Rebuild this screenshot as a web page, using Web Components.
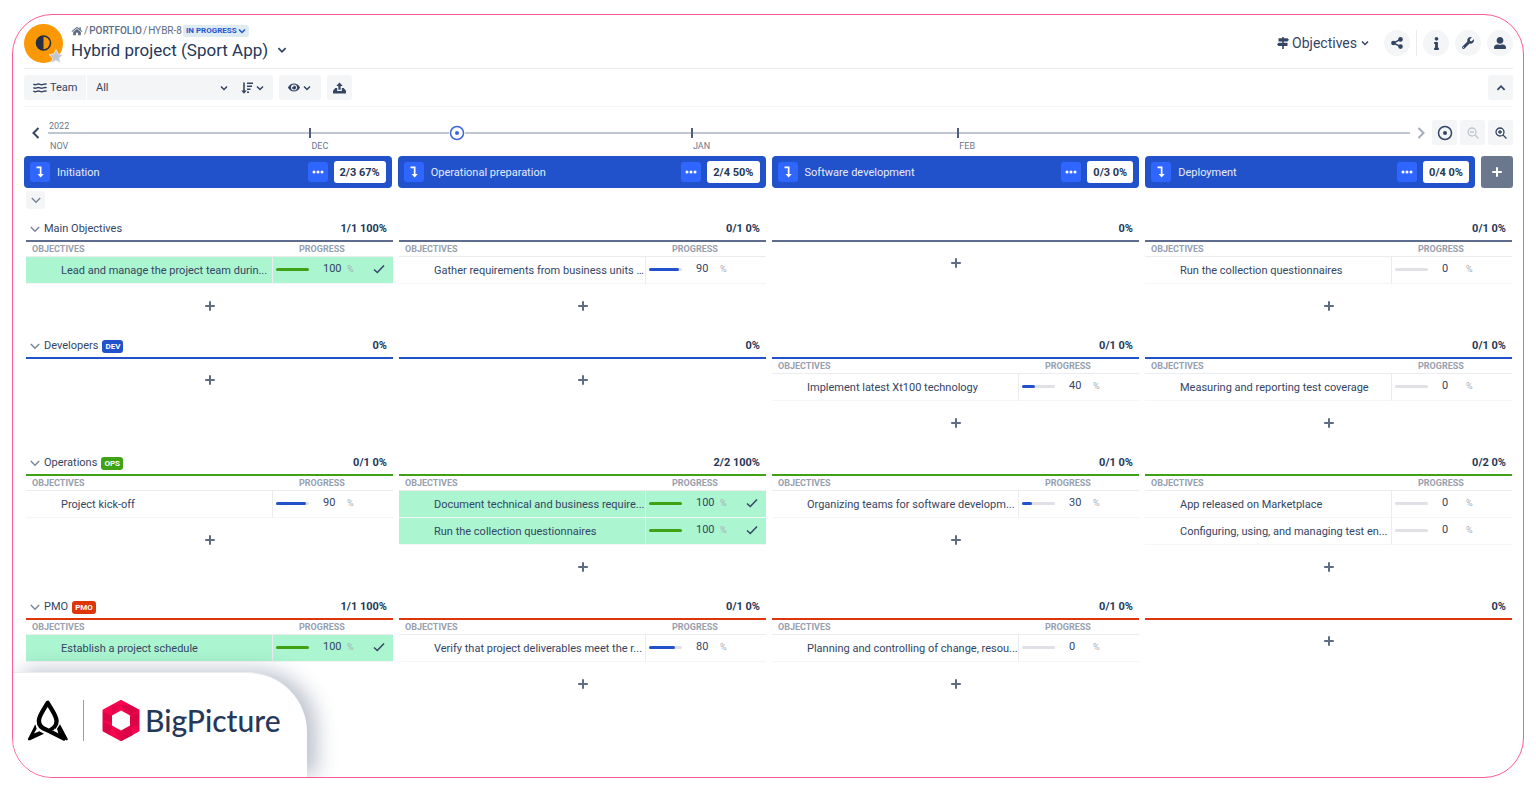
<!DOCTYPE html>
<html lang="en">
<head>
<meta charset="utf-8">
<title>Hybrid project (Sport App)</title>
<style>
  body {
    margin: 0;
    padding: 14px 12px;
    background: #fff;
    color: #344563;
    font: 11px/16px Roboto, "Liberation Sans", sans-serif;
  }
</style>
</head>
<body>
<bp-frame>
  <bp-header>Hybrid project (Sport App)</bp-header>
  <bp-toolbar></bp-toolbar>
  <bp-timeline></bp-timeline>
  <bp-board></bp-board>
  <bp-brand slot="corner">BigPicture</bp-brand>
</bp-frame>

<script>
const ICONS = {
  home: ['0 0 22 18', '<path d="M11 1 1 9.500l1.200 1.400L11 3.600l8.800 7.300L21 9.500l-3-2.500V2h-2.500v2.900z"/><path d="M11 5 4 11v6h5v-5h4v5h5v-6z"/>'],
  down: ['0 0 10 10', '<path d="M2 3.500 5 6.500l3-3" fill="none" stroke="currentColor" stroke-width="1.500"/>'],
  up: ['0 0 10 10', '<path d="M2 6.500 5 3.500l3 3" fill="none" stroke="currentColor" stroke-width="1.500"/>'],
  left: ['0 0 12 12', '<path d="M8.500 1 3.500 6l5 5" fill="none" stroke="currentColor" stroke-width="2"/>'],
  right: ['0 0 12 12', '<path d="M3.500 1l5 5-5 5" fill="none" stroke="currentColor" stroke-width="2"/>'],
  fold: ['0 0 10 10', '<path d="M.8 3 5 7.200 9.200 3" fill="none" stroke="currentColor" stroke-width="1.500"/>'],
  plus: ['0 0 10 10', '<path d="M5 .2v9.600M.2 5h9.600" fill="none" stroke="currentColor" stroke-width="2"/>'],
  check: ['0 0 12 10', '<path d="M1 5.500 4.300 8.500 11 1.500" fill="none" stroke="currentColor" stroke-width="1.500"/>'],
  signs: ['0 0 12 12', '<path d="M5.200 0h1.600v12H5.200z"/><path d="M1.500 1.200h9L12 2.800l-1.500 1.600h-9zM10.500 5.800h-9L0 7.400 1.500 9h9z"/>'],
  share: ['0 0 12 12', '<circle cx="9.500" cy="2.400" r="2.300"/><circle cx="2.400" cy="6" r="2.300"/><circle cx="9.500" cy="9.600" r="2.300"/><path d="M9.500 2.400 2.400 6l7.100 3.600" fill="none" stroke="currentColor" stroke-width="1.500"/>'],
  info: ['0 0 192 512', '<path d="M20 424.229h20V279.771H20c-11.046 0-20-8.954-20-20V212c0-11.046 8.954-20 20-20h112c11.046 0 20 8.954 20 20v212.229h20c11.046 0 20 8.954 20 20V492c0 11.046-8.954 20-20 20H20c-11.046 0-20-8.954-20-20v-47.771c0-11.046 8.954-20 20-20zM96 0C56.235 0 24 32.235 24 72s32.235 72 72 72 72-32.235 72-72S135.764 0 96 0z"/>'],
  wrench: ['0 0 512 512', '<path d="M507.730 109.100c-2.240-9.030-13.540-12.090-20.120-5.510l-74.360 74.360-67.880-11.310-11.310-67.880 74.360-74.360c6.620-6.620 3.430-17.900-5.660-20.160-47.380-11.740-99.550.910-136.580 37.930-39.640 39.640-50.550 97.100-34.050 147.200L18.740 402.760c-24.990 24.990-24.990 65.510 0 90.500 24.990 24.990 65.510 24.990 90.500 0l213.210-213.210c50.120 16.710 107.470 5.680 147.370-34.220 37.070-37.070 49.700-89.320 37.910-136.730zM64 472c-13.250 0-24-10.750-24-24 0-13.260 10.750-24 24-24s24 10.740 24 24c0 13.250-10.750 24-24 24z"/>'],
  user: ['0 0 512 512', '<path d="M256 288c79.500 0 144-64.500 144-144S335.500 0 256 0 112 64.500 112 144s64.500 144 144 144zm128 32h-55.100c-22.200 10.200-46.900 16-72.900 16s-50.600-5.800-72.900-16H128C57.300 320 0 377.300 0 448v16c0 26.500 21.500 48 48 48h416c26.500 0 48-21.500 48-48v-16c0-70.700-57.300-128-128-128z"/>'],
  waves: ['0 0 14 10', '<g fill="none" stroke="currentColor" stroke-width="1.400"><path d="M.3 1.200q1.700 1 3.400.2t3.300 0 3.300 0 3.400-.2M.3 4.700q1.700 1 3.400.2t3.300 0 3.300 0 3.400-.2M.3 8.200q1.700 1 3.400.2t3.300 0 3.300 0 3.400-.2"/></g>'],
  sort: ['0 0 12 12', '<path d="M2.200.5h1.600v8h2L3 11.700.2 8.500h2z"/><path d="M6 .5h6V2H6zM6 3.500h5V5H6zM6 6.500h3.500V8H6zM6 9.500h2V11H6z"/>'],
  eye: ['0 0 576 512', '<path d="M572.520 241.400C518.290 135.590 410.930 64 288 64S57.680 135.640 3.480 241.410a32.350 32.350 0 0 0 0 29.190C57.710 376.410 165.070 448 288 448s230.320-71.640 284.520-177.410a32.350 32.350 0 0 0 0-29.190zM288 400a144 144 0 1 1 144-144 143.930 143.930 0 0 1-144 144zm0-240a95.310 95.310 0 0 0-25.310 3.790 47.850 47.850 0 0 1-66.900 66.900A95.780 95.780 0 1 0 288 160z"/>'],
  upload: ['0 0 14 12', '<path d="M7 0 3.500 3.800h2.300V8h2.400V3.800h2.300z"/><path d="M2.500 6h2v3.200h5V6h2L14 9v3H0V9z"/>'],
  target: ['0 0 16 16', '<circle cx="8" cy="8" r="6.500" fill="none" stroke="currentColor" stroke-width="1.500"/><circle cx="8" cy="8" r="2"/>'],
  zoomOut: ['0 0 12 12', '<g fill="none" stroke="currentColor" stroke-width="1.300"><circle cx="5" cy="5" r="4"/><path d="M8 8l3.500 3.500M3 5h4"/></g>'],
  zoomIn: ['0 0 12 12', '<g fill="none" stroke="currentColor" stroke-width="1.300"><circle cx="5" cy="5" r="4"/><path d="M8 8l3.500 3.500M3 5h4M5 3v4"/></g>'],
  dots: ['0 0 12 4', '<circle cx="2" cy="2" r="1.500"/><circle cx="6" cy="2" r="1.500"/><circle cx="10" cy="2" r="1.500"/>'],
  stage: ['0 0 10 12', '<path d="M1.500.5h5v7.500h2.300L5.600 11.500 2.600 8h2.200V2.200H1.500z"/>'],
};

function icon(name, width, height = width) {
  const [box, shapes] = ICONS[name];
  return `<svg width="${width}" height="${height}" viewBox="${box}" fill="currentColor" aria-hidden="true">${shapes}</svg>`;
}

// Shared by every element that holds controls
const BASE = `
  * { box-sizing: border-box; }
  svg { display: block; flex: none; }
  button, select {
    font: inherit;
    color: inherit;
    background: none;
    border: 0;
    padding: 0;
    margin: 0;
    cursor: pointer;
  }
  button { display: flex; align-items: center; justify-content: center; }
  a { color: inherit; text-decoration: none; }
`;

class BpFrame extends HTMLElement {
  connectedCallback() {
    this.attachShadow({ mode: 'open' });
    this.shadowRoot.innerHTML = `
      <style>
        :host {
          display: block;
          box-sizing: border-box;
          position: relative;
          min-height: calc(100vh - 28px);
          padding: 0 10px 60px 11px;
          border: 1px solid #ff5c8f;
          border-radius: 40px;
          overflow: hidden;
        }
      </style>
      <slot></slot>
      <slot name="corner"></slot>
    `;
  }
}

class BpHeader extends HTMLElement {
  connectedCallback() {
    this.attachShadow({ mode: 'open' });
    this.shadowRoot.innerHTML = `
      <style>
        ${BASE}
        :host {
          display: flex;
          align-items: center;
          gap: 8px;
          height: 54px;
          box-sizing: border-box;
          padding-top: 3px;
          border-bottom: 1px solid #ebecf0;
        }
        .titles { flex: 1; }
        nav {
          display: flex;
          align-items: center;
          gap: 1px;
          font-size: 10px;
          line-height: 12px;
          color: #5e6c84;
        }
        nav b { font-weight: 500; }
        .status {
          height: 12px;
          padding: 0 2px 0 3px;
          border-radius: 3px;
          background: #deebf0;
          color: #2156d3;
          font-size: 8px;
          font-weight: 700;
        }
        .title {
          display: flex;
          align-items: center;
          gap: 8px;
          height: 24px;
          padding-top: 2px;
        }
        h1 { margin: 0; font-size: 17px; line-height: 24px; font-weight: 400; color: #253858; }
        .actions { display: flex; align-items: center; gap: 6px; }
        .view { gap: 3px; margin-right: 8px; font-size: 14px; }
        .round {
          width: 26px;
          height: 26px;
          border-radius: 50%;
          background: #f4f5f7;
        }
        .divider { width: 1px; height: 26px; background: #ebecf0; }
      </style>
      <svg width="39" height="39" viewBox="0 0 39 39" aria-hidden="true">
        <circle cx="19.500" cy="19.500" r="19.500" fill="#fa9805"/>
        <circle cx="19.500" cy="19" r="7" fill="none" stroke="#253040" stroke-width="1.600"/>
        <path d="M19.500 12a7 7 0 0 0 0 14z" fill="#253040"/>
        <path d="M32 25.500l2.100 4.500 4.900.6-3.600 3.400.9 4.900-4.300-2.400-4.300 2.400.9-4.900-3.600-3.400 4.900-.6z" fill="#c1c7d0" stroke="#fff" stroke-width=".6"/>
      </svg>
      <div class="titles">
        <nav>
          <a href="#" aria-label="Home">${icon('home', 12, 10)}</a><span>/</span>
          <a href="#"><b>PORTFOLIO</b></a><span>/</span><span>HYBR-8</span>
          <button class="status">IN PROGRESS${icon('down', 10)}</button>
        </nav>
        <div class="title">
          <h1><slot></slot></h1>
          <button aria-label="Switch box">${icon('down', 12)}</button>
        </div>
      </div>
      <div class="actions">
        <button class="view">${icon('signs', 12)}Objectives${icon('down', 10)}</button>
        <button class="round" aria-label="Share">${icon('share', 12)}</button>
        <span class="divider"></span>
        <button class="round" aria-label="Info">${icon('info', 5, 13)}</button>
        <button class="round" aria-label="Settings">${icon('wrench', 12)}</button>
        <button class="round" aria-label="Profile">${icon('user', 12)}</button>
      </div>
    `;
  }
}

class BpToolbar extends HTMLElement {
  connectedCallback() {
    this.attachShadow({ mode: 'open' });
    this.shadowRoot.innerHTML = `
      <style>
        ${BASE}
        :host {
          display: flex;
          align-items: center;
          gap: 6px;
          height: 38px;
          box-sizing: border-box;
          border-bottom: 1px solid #f4f5f7;
        }
        .group { display: flex; gap: 1px; border-radius: 3px; overflow: hidden; }
        .group > *, .tool { height: 25px; background: #f4f5f7; }
        label { display: flex; align-items: center; gap: 3px; width: 62px; padding-left: 9px; }
        .picker { display: flex; align-items: center; width: 186px; padding-right: 8px; }
        select {
          appearance: none;
          flex: 1;
          height: 25px;
          padding-left: 9px;
        }
        .sort { gap: 2px; margin-left: 12px; }
        .tool { border-radius: 3px; width: 25px; gap: 2px; }
        .wide { width: 42px; }
        .last { margin-left: auto; }
      </style>
      <div class="group">
        <label for="team">${icon('waves', 14, 10)}Team</label>
        <div class="picker">
          <select id="team"><option>All</option></select>
          ${icon('down', 10)}
          <button class="sort" aria-label="Sort">${icon('sort', 12)}${icon('down', 10)}</button>
        </div>
      </div>
      <button class="tool wide" aria-label="View">${icon('eye', 12, 11)}${icon('down', 10)}</button>
      <button class="tool" aria-label="Export">${icon('upload', 13, 12)}</button>
      <button class="tool last" aria-label="Collapse">${icon('up', 12)}</button>
    `;
  }
}

class BpTimeline extends HTMLElement {
  connectedCallback() {
    this.attachShadow({ mode: 'open' });
    this.shadowRoot.innerHTML = `
      <style>
        ${BASE}
        :host { display: flex; align-items: center; height: 49px; padding-top: 2px; box-sizing: border-box; }
        .step { width: 24px; height: 24px; }
        .next { width: 22px; color: #a5adba; }
        .track { position: relative; flex: 1; color: #6b778c; font-size: 9px; line-height: 14px; }
        .year { height: 13px; padding-left: 1px; }
        .months {
          display: grid;
          grid-template-columns: 261fr 381fr 266fr 452fr;
          height: 14px;
          border-top: 2px solid #c1c7d0;
        }
        .months span { padding: 5px 0 0 2px; height: 18px; }
        .months span + span {
          background: linear-gradient(#505f79, #505f79) 0 0 / 2px 10px no-repeat;
          margin-top: -6px;
          padding-top: 11px;
        }
        .today {
          position: absolute;
          left: 30%;
          top: 6px;
          width: 16px;
          margin-left: -8px;
          border-radius: 50%;
          background: #fff;
          color: #3b66dc;
        }
        .tools { display: flex; gap: 3px; }
        .tools button { width: 25px; height: 25px; border-radius: 3px; background: #f4f5f7; }
        .tools button:disabled { color: #c1c7d0; }
      </style>
      <button class="step" aria-label="Earlier">${icon('left', 12)}</button>
      <div class="track">
        <div class="year">2022</div>
        <div class="months"><span>NOV</span><span>DEC</span><span>JAN</span><span>FEB</span></div>
        <div class="today">${icon('target', 16)}</div>
      </div>
      <button class="step next" aria-label="Later">${icon('right', 12)}</button>
      <div class="tools">
        <button aria-label="Go to today">${icon('target', 16)}</button>
        <button aria-label="Zoom out" disabled>${icon('zoomOut', 12)}</button>
        <button aria-label="Zoom in">${icon('zoomIn', 12)}</button>
      </div>
    `;
  }
}

class BpStage extends HTMLElement {
  connectedCallback() {
    this.attachShadow({ mode: 'open' });
    this.shadowRoot.innerHTML = `
      <style>
        ${BASE}
        :host {
          display: flex;
          align-items: center;
          gap: 6px;
          flex: 1;
          height: 32px;
          box-sizing: border-box;
          padding: 0 6px;
          border-radius: 4px;
          background: #2152cc;
          color: #fff;
        }
        button { width: 20px; height: 20px; border-radius: 3px; background: #2f66ff; }
        .name { flex: 1; padding: 1px 0 0 1px; color: #e6ecfa; }
        .score {
          padding: 4px 6px 2px;
          border-radius: 3px;
          background: #fff;
          color: #253858;
          font-weight: 700;
        }
      </style>
      <button aria-label="Open">${icon('stage', 10, 12)}</button>
      <span class="name"><slot></slot></span>
      <button aria-label="More">${icon('dots', 12, 4)}</button>
      <span class="score">${this.getAttribute('score')}</span>
    `;
  }
}

class BpCell extends HTMLElement {
  connectedCallback() {
    const rows = this.objectives || [];
    this.attachShadow({ mode: 'open' });
    this.shadowRoot.innerHTML = `
      <style>
        ${BASE}
        :host { display: block; min-width: 0; }
        header {
          display: flex;
          align-items: center;
          gap: 4px;
          height: 32px;
          padding: 8px 6px 0 4px;
          border-bottom: 2px solid var(--lane-color);
        }
        .score { margin-left: auto; font-weight: 700; color: #253858; }
        table { width: 100%; table-layout: fixed; border-spacing: 0; }
        .side { width: 121px; }
        th {
          height: 15px;
          padding: 0 0 1px 6px;
          border-bottom: 1px solid #ebecf0;
          color: #97a0af;
          font-size: 9px;
          line-height: 12px;
          font-weight: 700;
          text-align: left;
        }
        th + th { padding-left: 27px; }
        td { height: 27px; padding: 0; border-bottom: 1px solid #f4f5f7; }
        td + td { border-left: 1px solid #ebecf0; }
        .name {
          padding: 1px 0 0 35px;
          white-space: nowrap;
          overflow: hidden;
          text-overflow: ellipsis;
        }
        .done td { background: #abf5d1; }
        .progress { display: flex; align-items: center; padding: 0 0 2px 3px; }
        .bar { width: 33px; height: 3px; margin-right: 14px; border-radius: 2px; background: #dfe1e6; }
        .fill { height: 3px; border-radius: 2px; background: #2152cc; }
        .done .fill { background: #3fa214; }
        .value { width: 24px; }
        .unit { width: 26px; font-size: 9px; color: #a5adba; }
        .add { width: 20px; height: 42px; margin: 0 auto; color: #5e6c84; }
        table + .add { height: 43px; }
      </style>
      <header><slot></slot><span class="score">${this.getAttribute('score')}</span></header>
      ${rows.length ? `
      <table>
        <colgroup><col><col class="side"></colgroup>
        <thead><tr><th>OBJECTIVES</th><th>PROGRESS</th></tr></thead>
        <tbody>
          ${rows.map(([name, value]) => `
          <tr class="${value === 100 ? 'done' : ''}">
            <td class="name">${name}</td>
            <td>
              <div class="progress">
                <div class="bar"><div class="fill" style="width: ${value}%"></div></div>
                <span class="value">${value}</span><span class="unit">%</span>
                ${value === 100 ? icon('check', 12, 10) : ''}
              </div>
            </td>
          </tr>`).join('')}
        </tbody>
      </table>` : ''}
      <button class="add" aria-label="Add objective">${icon('plus', 10)}</button>
    `;
  }
}

const STAGES = [
  ['Initiation', '2/3 67%'],
  ['Operational preparation', '2/4 50%'],
  ['Software development', '0/3 0%'],
  ['Deployment', '0/4 0%'],
];

const LANES = [
  { name: 'Main Objectives', color: '#5e6c8e', cells: [
    ['1/1 100%', [['Lead and manage the project team durin...', 100]]],
    ['0/1 0%', [['Gather requirements from business units ...', 90]]],
    ['0%', []],
    ['0/1 0%', [['Run the collection questionnaires', 0]]],
  ] },
  { name: 'Developers', tag: 'DEV', color: '#2152cc', cells: [
    ['0%', []],
    ['0%', []],
    ['0/1 0%', [['Implement latest Xt100 technology', 40]]],
    ['0/1 0%', [['Measuring and reporting test coverage', 0]]],
  ] },
  { name: 'Operations', tag: 'OPS', color: '#3fa214', cells: [
    ['0/1 0%', [['Project kick-off', 90]]],
    ['2/2 100%', [['Document technical and business require...', 100], ['Run the collection questionnaires', 100]]],
    ['0/1 0%', [['Organizing teams for software developm...', 30]]],
    ['0/2 0%', [['App released on Marketplace', 0], ['Configuring, using, and managing test en...', 0]]],
  ] },
  { name: 'PMO', tag: 'PMO', color: '#de350b', cells: [
    ['1/1 100%', [['Establish a project schedule', 100]]],
    ['0/1 0%', [['Verify that project deliverables meet the r...', 80]]],
    ['0/1 0%', [['Planning and controlling of change, resou...', 0]]],
    ['0%', []],
  ] },
];

class BpBoard extends HTMLElement {
  connectedCallback() {
    this.attachShadow({ mode: 'open' });
    this.shadowRoot.innerHTML = `
      <style>
        ${BASE}
        :host { display: block; }
        .stages, .lane { display: grid; grid-template-columns: repeat(4, minmax(0, 1fr)); gap: 6px; }
        .stages > div { display: flex; gap: 6px; }
        .add { width: 32px; height: 32px; border-radius: 3px; background: #6b778c; color: #fff; }
        .lanes { padding: 0 1px 0 2px; }
        .all { width: 19px; height: 18px; margin: 3px 0 1px; border-radius: 3px; background: #f4f5f7; color: #7a869a; }
        .fold { color: #7a869a; }
        .tag {
          padding: 0 3px;
          border-radius: 3px;
          background: var(--lane-color);
          color: #fff;
          font-size: 8px;
          line-height: 13px;
          font-weight: 700;
        }
      </style>
      <div class="stages">
        ${STAGES.map(([name, score], i) => `
        <div>
          <bp-stage score="${score}">${name}</bp-stage>
          ${i === STAGES.length - 1 ? `<button class="add" aria-label="Add stage">${icon('plus', 10)}</button>` : ''}
        </div>`).join('')}
      </div>
      <div class="lanes">
        <button class="all" aria-label="Collapse all">${icon('fold', 10)}</button>
      </div>
    `;

    const lanes = this.shadowRoot.querySelector('.lanes');
    LANES.forEach(lane => {
      const row = document.createElement('section');
      row.className = 'lane';
      row.style.setProperty('--lane-color', lane.color);
      lane.cells.forEach(([score, objectives], i) => {
        const cell = document.createElement('bp-cell');
        cell.setAttribute('score', score);
        cell.objectives = objectives;
        if (i === 0) {
          cell.innerHTML = `
            <button class="fold" aria-label="Collapse">${icon('fold', 10)}</button>
            <span>${lane.name}</span>
            ${lane.tag ? `<span class="tag">${lane.tag}</span>` : ''}
          `;
        }
        row.append(cell);
      });
      lanes.append(row);
    });
  }
}

class BpBrand extends HTMLElement {
  connectedCallback() {
    this.attachShadow({ mode: 'open' });
    this.shadowRoot.innerHTML = `
      <style>
        ${BASE}
        :host {
          position: absolute;
          left: 0;
          bottom: 0;
          display: flex;
          align-items: center;
          height: 105px;
          box-sizing: border-box;
          padding: 0 26px 10px 15px;
          border-top: 1px solid #ebecf0;
          border-radius: 0 60px 0 0;
          background: #fff;
          box-shadow: 10px -2px 20px rgba(37, 56, 88, .3);
          color: #253858;
          font: 500 30px/36px Lato, "Open Sans", sans-serif;
        }
        .divider { width: 1px; height: 41px; margin: 0 18px 0 15px; background: #97a0af; }
        .name { padding-left: 5px; }
      </style>
      <svg width="40" height="41" viewBox="84 330 120 122" aria-hidden="true">
        <path d="M162 412C170 404 171 394 168 384 164 370 153 355 143 338 133 355 122 370 118 384c-5 20 5 30 22 35l56 28" fill="none" stroke="#000" stroke-width="13" stroke-linejoin="round"/>
        <path d="M106 402 84 446q-1 6 6 4l42-19-14-8-16 7 8-14zM180 402l23 44q2 6-5 4l-22-18-5-16zM143 418l18 2 10-16-6-2z" fill="#000"/>
      </svg>
      <span class="divider"></span>
      <svg width="38" height="41" viewBox="0 0 38 41" aria-hidden="true">
        <path d="M19 1 36.500 10.500v20L19 40 1.500 30.500v-20z" fill="#f7064f" stroke="#f7064f" stroke-width="2" stroke-linejoin="round"/>
        <path d="M19 5l9 10 9-5-9-5zM37 12v12l-9 3V16zM19 41l12-6-3-9-9 5zM1 22v9l7 4 2-9zM1 12l9 4v6L1 20z" fill="#dc0347"/>
        <path d="M10 5l9 0-9 10zM28 27l9-3v7zM10 27l9 4v9z" fill="#e8044a"/>
        <path d="M19 10.500 28 15.500v10L19 30.500 10 25.500v-10z" fill="#fff"/>
      </svg>
      <span class="name"><slot></slot></span>
    `;
  }
}

customElements.define('bp-frame', BpFrame);
customElements.define('bp-header', BpHeader);
customElements.define('bp-toolbar', BpToolbar);
customElements.define('bp-timeline', BpTimeline);
customElements.define('bp-stage', BpStage);
customElements.define('bp-cell', BpCell);
customElements.define('bp-board', BpBoard);
customElements.define('bp-brand', BpBrand);
</script>
</body>
</html>
